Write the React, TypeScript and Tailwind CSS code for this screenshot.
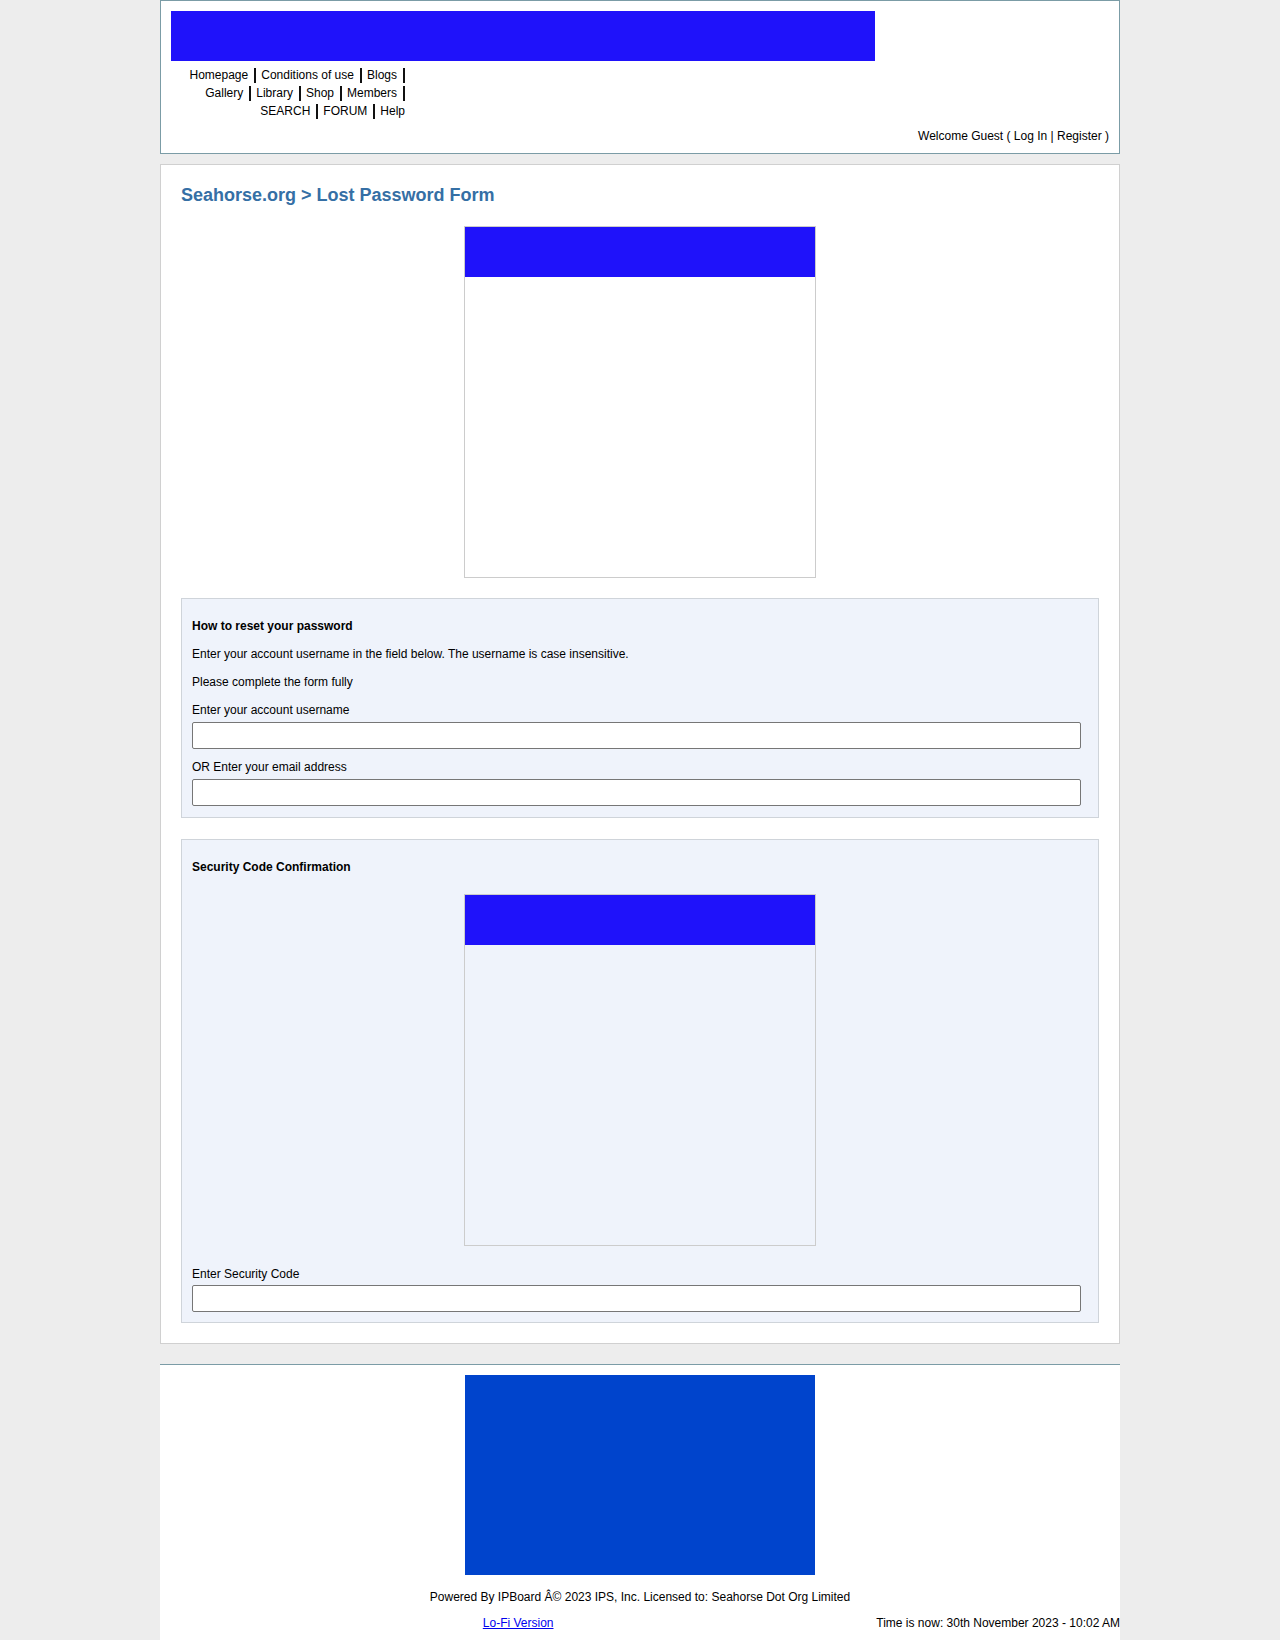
import React from "react";

const font = { fontFamily: '"Liberation Sans", Arial, Helvetica, sans-serif' };

function NavLine({ items, last }: { items: string[]; last: boolean }) {
  return (
    <div className="flex h-[18px] items-center justify-end">
      {items.map((it, i) => (
        <React.Fragment key={it}>
          <span className="leading-[18px]">{it}</span>
          {(!last || i < items.length - 1) && (
            <span
              className={
                "h-[15px] w-[2px] bg-[#111] " +
                (i < items.length - 1 ? "ml-[6px] mr-[5px]" : "ml-[6px]")
              }
            />
          )}
        </React.Fragment>
      ))}
    </div>
  );
}

function AdBox() {
  return (
    <div className="mx-auto h-[352px] w-[352px] border border-[#cccccc]">
      <div className="h-[50px] w-full bg-[#1f12fa]" />
    </div>
  );
}

function Input() {
  return (
    <input
      type="text"
      className="block h-[27px] w-[889px] rounded-[2px] border border-[#767676] bg-white outline-none"
    />
  );
}

export default function App() {
  return (
    <div className="min-h-[1640px] bg-[#ededed] text-[12px] text-black" style={font}>
      {/* Header */}
      <div className="mx-auto w-[960px] border border-[#7b9ca6] bg-white px-[10px] pt-[10px] pb-[10px]">
        <div className="h-[50px] w-[704px] bg-[#1f12fa]" />
        <div className="mt-[5px] flex w-[234px] flex-col">
          <NavLine items={["Homepage", "Conditions of use", "Blogs"]} last={false} />
          <NavLine items={["Gallery", "Library", "Shop", "Members"]} last={false} />
          <NavLine items={["SEARCH", "FORUM", "Help"]} last={true} />
        </div>
        <div className="mt-[9px] text-right leading-[14px]">
          Welcome Guest ( Log In | Register )
        </div>
      </div>

      {/* Main */}
      <div className="mx-auto mt-[10px] w-[960px] border border-[#d0d0d0] bg-white p-[20px]">
        <h1 className="text-[18px] font-bold leading-[21px] text-[#356fa5]">
          Seahorse.org &gt; Lost Password Form
        </h1>
        <div className="mt-[20px]">
          <AdBox />
        </div>

        <div className="mt-[20px] border border-[#cfd4da] bg-[#eff3fb] px-[10px] pt-[10px] pb-[11px]">
          <div className="mt-[10px] font-bold leading-[14px]">How to reset your password</div>
          <p className="mt-[14px] leading-[14px]">
            Enter your account username in the field below. The username is case insensitive.
          </p>
          <p className="mt-[14px] leading-[14px]">Please complete the form fully</p>
          <div className="mt-[14px] leading-[14px]">Enter your account username</div>
          <div className="mt-[5px]">
            <Input />
          </div>
          <div className="mt-[11px] leading-[14px]">OR Enter your email address</div>
          <div className="mt-[5px]">
            <Input />
          </div>
        </div>

        <div className="mt-[21px] border border-[#cfd4da] bg-[#eff3fb] px-[10px] pt-[10px] pb-[10px]">
          <div className="mt-[10px] font-bold leading-[14px]">Security Code Confirmation</div>
          <div className="mt-[20px]">
            <AdBox />
          </div>
          <div className="mt-[21px] leading-[14px]">Enter Security Code</div>
          <div className="mt-[4px]">
            <Input />
          </div>
        </div>
      </div>

      {/* Footer */}
      <div className="mx-auto mt-[20px] w-[960px] border-t border-[#7b9ca6] bg-white pt-[10px] pb-[12px]">
        <div className="mx-auto h-[200px] w-[350px] bg-[#0044cc]" />
        <div className="mt-[15px] text-center leading-[14px]">
          Powered By IPBoard Â© 2023 IPS, Inc. Licensed to: Seahorse Dot Org Limited
        </div>
        <div className="mt-[12px] flex leading-[14px]">
          <div className="flex-1 text-center">
            <a href="#" className="text-[#0000ee] underline">
              Lo-Fi Version
            </a>
          </div>
          <div className="text-right">Time is now: 30th November 2023 - 10:02 AM</div>
        </div>
      </div>
    </div>
  );
}
